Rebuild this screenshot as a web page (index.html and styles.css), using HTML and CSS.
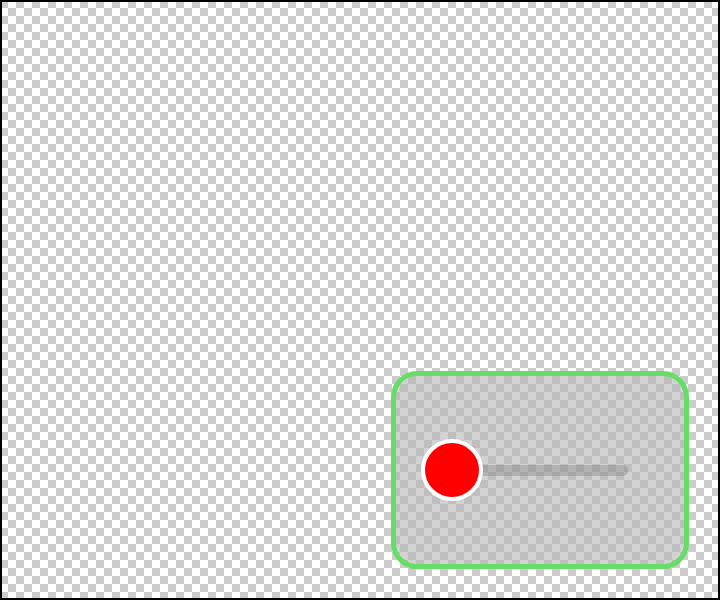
FILE: index.html
```html
<!DOCTYPE html>
<html>
<head>
<meta charset="utf-8">
<link rel="stylesheet" href="styles.css">
</head>
<body>
<div class="panel">
  <div class="track">
    <div class="thumb"></div>
  </div>
</div>
</body>
</html>
```

FILE: styles.css
```css
html, body {
  margin: 0;
  padding: 0;
}
body {
  box-sizing: border-box;
  width: 720px;
  height: 600px;
  border: 2px solid #000;
  background-color: #fff;
  background-image: conic-gradient(#fff 25%, #cccccc 0 50%, #fff 0 75%, #cccccc 0);
  background-size: 16px 16px;
  background-origin: border-box;
  display: flex;
  justify-content: flex-end;
  align-items: flex-end;
  padding: 0 29px 29px 0;
  font-family: "Liberation Sans", Arial, sans-serif;
}
.panel {
  box-sizing: border-box;
  width: 298px;
  height: 198px;
  border: 5px solid #66dd66;
  border-radius: 26px;
  background: rgba(180, 180, 180, 0.6);
  display: flex;
  align-items: center;
  padding-left: 25px;
}
.track {
  position: relative;
  width: 207px;
  height: 11px;
  border-radius: 6px;
  background: rgba(120, 120, 120, 0.35);
}
.thumb {
  position: absolute;
  left: 0;
  top: 50%;
  width: 62px;
  height: 62px;
  box-sizing: border-box;
  margin-top: -31px;
  border: 4px solid #fff;
  border-radius: 50%;
  background: #ff0000;
}
```
